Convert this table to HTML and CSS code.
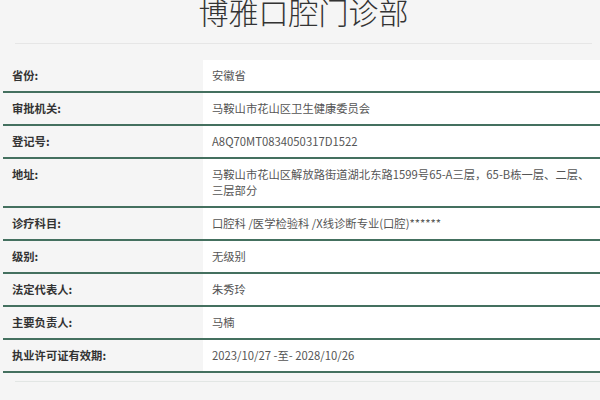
FILE: index.html
```html
<!DOCTYPE html>
<html lang="zh-CN">
<head>
<meta charset="utf-8">
<link rel="stylesheet" href="styles.css">
</head>
<body>
<div class="page">
  <header class="head">
    <h1 class="title">博雅口腔门诊部</h1>
  </header>
  <div class="table">
    <div class="row"><div class="label">省份:</div><div class="value">安徽省</div></div>
    <div class="row"><div class="label">审批机关:</div><div class="value">马鞍山市花山区卫生健康委员会</div></div>
    <div class="row"><div class="label">登记号:</div><div class="value">A8Q70MT0834050317D1522</div></div>
    <div class="row"><div class="label">地址:</div><div class="value">马鞍山市花山区解放路街道湖北东路1599号65-A三层，65-B栋一层、二层、三层部分</div></div>
    <div class="row"><div class="label">诊疗科目:</div><div class="value">口腔科 /医学检验科 /X线诊断专业(口腔)******</div></div>
    <div class="row"><div class="label">级别:</div><div class="value">无级别</div></div>
    <div class="row"><div class="label">法定代表人:</div><div class="value">朱秀玲</div></div>
    <div class="row"><div class="label">主要负责人:</div><div class="value">马楠</div></div>
    <div class="row"><div class="label">执业许可证有效期:</div><div class="value">2023/10/27 -至- 2028/10/26</div></div>
  </div>
  <div class="foot"></div>
</div>
</body>
</html>
```

FILE: styles.css
```css
html, body {
  margin: 0;
  padding: 0;
  background: #f5f5f5;
  overflow: hidden;
}
.page {
  width: 600px;
  height: 400px;
  font-family: "Noto Sans CJK SC", "Noto Sans", sans-serif;
}
.head {
  margin: -4px 8px 0 15px;
  padding-bottom: 17px;
  border-bottom: 1px solid #e6e6e6;
  text-align: center;
}
.title {
  margin: 0;
  font-size: 30px;
  line-height: 30px;
  font-weight: 300;
  color: #333;
}
.table {
  margin: 16px 0 0 3px;
}
.row {
  display: grid;
  grid-template-columns: 200px 1fr;
  border-bottom: 2px solid #44705f;
}
.label {
  padding: 7px 9px 8px;
  font-size: 11.3px;
  line-height: 16px;
  font-weight: 700;
  color: #333;
}
.value {
  background: #fff;
  padding: 7px 6px 8px 9px;
  font-size: 11.3px;
  line-height: 16px;
  color: #555;
}
.foot {
  margin: 8px 0 0 15px;
  border-top: 1px solid #e2e6e4;
}
```
